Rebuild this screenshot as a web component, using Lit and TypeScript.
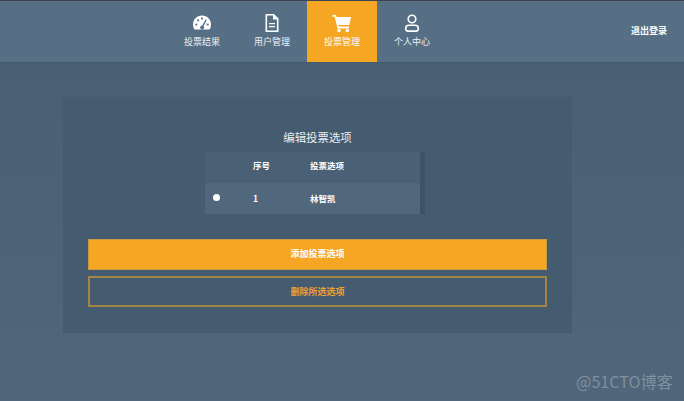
import { LitElement, html, css } from "lit";
import { customElement } from "lit/decorators.js";

@customElement("app-root")
export class AppRoot extends LitElement {
  static styles = css`
    :host { display: block; width: 684px; height: 401px; position: relative; overflow: hidden;
      background: linear-gradient(180deg, #485e72 0%, #4f667b 100%);
      font-family: "Noto Sans CJK SC", "Liberation Sans", sans-serif; color: #fff; }
    .header { height: 61px; border-top: 1px solid #3a4452; background: #566f85; display: flex; padding-left: 167px; box-shadow: 0 1px 2px rgba(60,80,100,.35); }
    .nav { width: 70px; display: flex; flex-direction: column; align-items: center; padding-top: 12px; box-sizing: border-box; font-size: 9px; color: #eef2f5; line-height: 12px; }
    .nav svg { width: 20px; height: 20px; margin-bottom: 3px; display: block; }
    .nav.active { background: #f5a623; color: #fff; }
    .logout { margin-left: auto; margin-right: 17px; font-size: 9px; font-weight: 700; line-height: 12px; padding-top: 24px; }
    .panel { margin: 35px 0 0 63px; width: 509px; height: 236px; box-sizing: border-box; background: #455b6f; padding: 32px 25px 0; }
    .title { text-align: center; font-size: 11.4px; line-height: 16px; color: #e9edf0; margin-bottom: 7px; }
    .table { margin-left: 117px; width: 220px; height: 62px; box-sizing: border-box; border-right: 5px solid #3e5266; font-size: 8.5px; font-weight: 700; }
    .row { display: grid; grid-template-columns: 48px 57px 1fr; align-items: center; height: 31px; box-sizing: border-box; }
    .row.head { background: #4a6075; padding-bottom: 5px; }
    .row.body { background: #51677c; padding-bottom: 2px; }
    .dot { width: 7px; height: 7px; border-radius: 50%; background: #fff; margin-left: 8px; }
    .btn { height: 31px; box-sizing: border-box; display: flex; align-items: center; justify-content: center; font-size: 9px; font-weight: 700; }
    .btn.primary { margin-top: 25px; background: #f5a623; border: 1px solid #c99a3e; color: #fff; padding-bottom: 2px; }
    .btn.ghost { margin-top: 6px; border: 2px solid #a38647; color: #f0a030; padding-bottom: 1px; }
    .mark { position: absolute; right: 11px; bottom: 11px; font-size: 16.2px; line-height: 18px; color: rgba(180,187,194,.5); }
  `;

  render() {
    return html`
      <div class="header">
        <div class="nav">
          <svg viewBox="0 0 20 20"><path fill="#fff" d="M10 2.500C4.800 2.500 1 6.700 1 11.600c0 1.700.4 3.200 1.200 4.600.2.3.5.4.8.4h14c.3 0 .6-.1.8-.4.8-1.400 1.200-2.900 1.200-4.600 0-4.900-3.800-9.100-9-9.100z"/><g fill="#566f85"><circle cx="4.300" cy="11.500" r="1.100"/><circle cx="6.200" cy="7.300" r="1.100"/><circle cx="10" cy="5.600" r="1.100"/><circle cx="15.700" cy="11.500" r="1.100"/><path d="M13.600 6.400l1.200.6-3.200 6.100a2 2 0 1 1-1.300-.6z"/></g></svg>
          <span>投票结果</span>
        </div>
        <div class="nav">
          <svg viewBox="0 0 20 20"><path fill="none" stroke="#fff" stroke-width="1.600" stroke-linejoin="round" d="M4.300 1.800h7.400l4 4v12.400H4.300z"/><path fill="#fff" d="M11 1.500l5 5h-5zM7 10h6v1.300H7zM7 13h6v1.300H7z"/></svg>
          <span>用户管理</span>
        </div>
        <div class="nav active">
          <svg viewBox="0 0 20 20"><path fill="#fff" d="M.5 2h3.400l.6 2H19l-1.600 8H6.600l.4 1.600h10V15.400H5.500L2.700 3.700H.5z"/><circle fill="#fff" cx="7" cy="17.500" r="1.700"/><circle fill="#fff" cx="15.300" cy="17.500" r="1.700"/></svg>
          <span>投票管理</span>
        </div>
        <div class="nav">
          <svg viewBox="0 0 20 20"><g fill="none" stroke="#fff" stroke-width="1.600"><circle cx="10" cy="6" r="3.800"/><path d="M7 12.300h6c2 0 3.300 1.300 3.300 3 0 1.600-.8 2.800-2.200 2.800H5.900c-1.400 0-2.200-1.200-2.200-2.800 0-1.700 1.300-3 3.300-3z"/></g></svg>
          <span>个人中心</span>
        </div>
        <div class="logout">退出登录</div>
      </div>
      <div class="panel">
        <div class="title">编辑投票选项</div>
        <div class="table">
          <div class="row head"><span></span><span>序号</span><span>投票选项</span></div>
          <div class="row body"><div class="dot"></div><span>1</span><span>林智凯</span></div>
        </div>
        <div class="btn primary">添加投票选项</div>
        <div class="btn ghost">删除所选选项</div>
      </div>
      <div class="mark">@51CTO博客</div>
    `;
  }
}
